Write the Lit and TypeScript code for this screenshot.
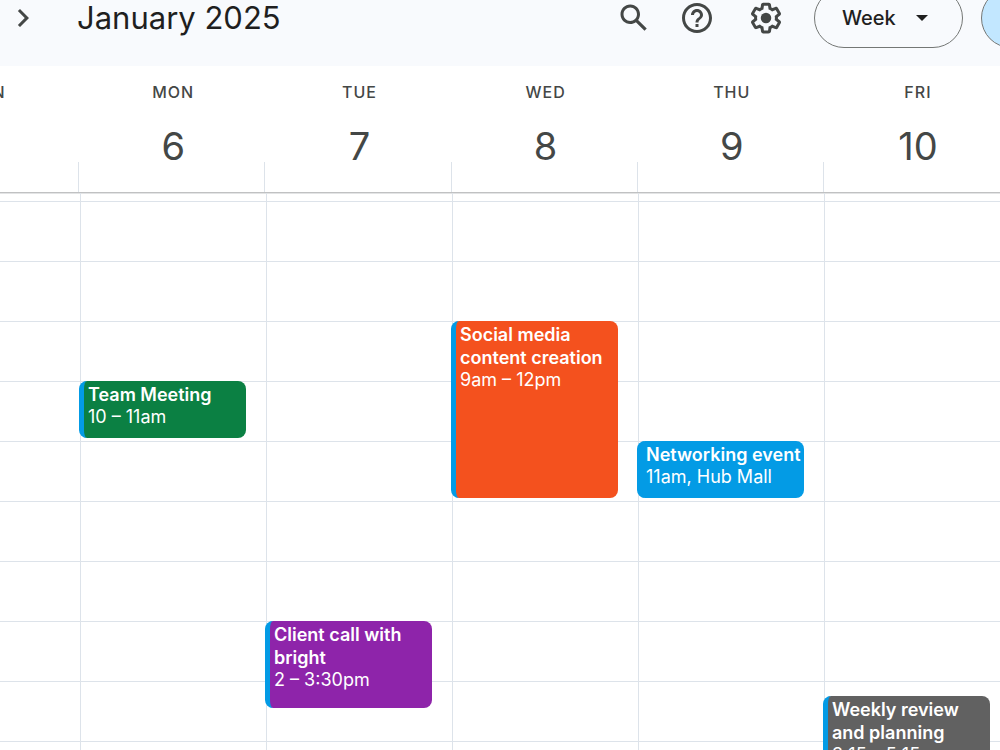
import { LitElement, html, css, svg } from "lit";
import { customElement, property } from "lit/decorators.js";
import { styleMap } from "lit/directives/style-map.js";

interface CalendarEvent {
  title: string;
  time: string;
  /** Quarter-hour grid lines, line 1 being 7am. */
  start: number;
  end: number;
  color: string;
}

interface Day {
  name: string;
  date: string;
  events: CalendarEvent[];
}

const week: Day[] = [
  { name: "SUN", date: "5", events: [] },
  {
    name: "MON",
    date: "6",
    events: [{ title: "Team Meeting", time: "10 – 11am", start: 13, end: 17, color: "#0b8043" }],
  },
  {
    name: "TUE",
    date: "7",
    events: [{ title: "Client call with bright", time: "2 – 3:30pm", start: 29, end: 35, color: "#8e24aa" }],
  },
  {
    name: "WED",
    date: "8",
    events: [{ title: "Social media content creation", time: "9am – 12pm", start: 9, end: 21, color: "#f4511e" }],
  },
  {
    name: "THU",
    date: "9",
    events: [{ title: "Networking event", time: "11am, Hub Mall", start: 17, end: 21, color: "#039be5" }],
  },
  {
    name: "FRI",
    date: "10",
    events: [{ title: "Weekly review and planning", time: "3:15 – 5:15pm", start: 34, end: 42, color: "#616161" }],
  },
];

const icons = {
  next: svg`<path d="M10 6 8.59 7.41 13.17 12l-4.58 4.59L10 18l6-6z"/>`,
  search: svg`<path d="M20.49 19l-5.73-5.73C15.53 12.2 16 10.91 16 9.5 16 5.91 13.09 3 9.5 3S3 5.91 3 9.5 5.91 16 9.5 16c1.41 0 2.7-.47 3.77-1.24L19 20.49 20.49 19zM5 9.5C5 7.01 7.01 5 9.5 5S14 7.01 14 9.5 11.99 14 9.5 14 5 11.99 5 9.5z"/>`,
  help: svg`<path d="M11 18h2v-2h-2v2zm1-16C6.48 2 2 6.48 2 12s4.48 10 10 10 10-4.48 10-10S17.52 2 12 2zm0 18c-4.41 0-8-3.59-8-8s3.59-8 8-8 8 3.59 8 8-3.59 8-8 8zm0-14c-2.21 0-4 1.79-4 4h2c0-1.1.9-2 2-2s2 .9 2 2c0 2-3 1.75-3 5h2c0-2.25 3-2.5 3-5 0-2.21-1.79-4-4-4z"/>`,
  settings: svg`<path d="M13.85 22.25h-3.7c-.74 0-1.36-.54-1.45-1.27l-.27-1.89c-.27-.14-.53-.29-.79-.46l-1.8.72c-.7.26-1.47-.03-1.81-.65L2.2 15.53c-.35-.66-.2-1.44.36-1.88l1.53-1.19c-.01-.15-.02-.3-.02-.46 0-.15.01-.31.02-.46l-1.52-1.19c-.59-.45-.74-1.26-.37-1.88l1.85-3.19c.34-.62 1.11-.9 1.79-.63l1.81.73c.26-.17.52-.32.78-.46l.27-1.91c.09-.7.71-1.25 1.44-1.25h3.7c.74 0 1.36.54 1.45 1.27l.27 1.89c.27.14.53.29.79.46l1.8-.72c.71-.26 1.48.03 1.82.65l1.84 3.18c.36.66.2 1.44-.36 1.88l-1.52 1.19c.01.15.02.3.02.46s-.01.31-.02.46l1.52 1.19c.56.45.72 1.23.37 1.86l-1.86 3.22c-.34.62-1.11.9-1.8.63l-1.8-.72c-.26.17-.52.32-.78.46l-.27 1.91c-.1.68-.72 1.22-1.46 1.22zm-3.23-2h2.76l.37-2.55.53-.22c.44-.18.88-.44 1.34-.78l.45-.34 2.38.96 1.38-2.4-2.03-1.58.07-.56c.03-.26.06-.51.06-.78s-.03-.53-.06-.78l-.07-.56 2.03-1.58-1.39-2.4-2.39.96-.45-.35c-.42-.32-.87-.58-1.33-.77l-.52-.22-.37-2.55h-2.76l-.37 2.55-.53.21c-.44.19-.88.44-1.34.79l-.45.33-2.38-.95-1.39 2.39 2.03 1.58-.07.56a7 7 0 0 0-.06.79c0 .26.02.53.06.78l.07.56-2.03 1.58 1.38 2.4 2.39-.96.45.35c.43.33.86.58 1.33.77l.53.22.38 2.55z"/><circle cx="12" cy="12" r="3.5"/>`,
};

const icon = (shape: unknown) =>
  html`<svg class="icon" viewBox="0 0 24 24" aria-hidden="true">${shape}</svg>`;

@customElement("calendar-event")
class CalendarEventBlock extends LitElement {
  @property({ attribute: false }) event!: CalendarEvent;

  static styles = css`
    :host {
      display: block;
    }
    .event {
      display: block;
      box-sizing: border-box;
      width: 100%;
      height: 100%;
      padding: 2px 0 0 4px;
      border: 0;
      border-left: 5px solid #039be5;
      border-radius: 8px;
      overflow: hidden;
      color: #fff;
      font: inherit;
      text-align: left;
    }
    .content {
      display: flex;
      flex-direction: column;
      height: 100%;
    }
    .title {
      font-weight: 600;
      line-height: 23px;
    }
    .time {
      line-height: 22px;
    }
  `;

  render() {
    const { title, time, color } = this.event;
    return html`<button class="event" style=${styleMap({ backgroundColor: color })}>
      <span class="content"><span class="title">${title}</span><span class="time">${time}</span></span>
    </button>`;
  }
}

@customElement("app-root")
class AppRoot extends LitElement {
  static styles = css`
    :host {
      display: flex;
      flex-direction: column;
      height: 100vh;
      overflow: hidden;
      background: #fff;
      color: #444746;
      font-family: "Google Sans", Inter, "Liberation Sans", sans-serif;
    }
    .toolbar {
      display: flex;
      flex: none;
      align-items: center;
      justify-content: space-between;
      box-sizing: border-box;
      height: 96px;
      margin: -30px -81px 0 0;
      padding: 0 0 0 5px;
      background: #f8fafd;
    }
    .period,
    .actions,
    .tools,
    .lookup {
      display: flex;
      align-items: center;
    }
    .period {
      gap: 36px;
    }
    .tools {
      gap: 33px;
      margin-right: 30px;
    }
    .lookup {
      gap: 27px;
    }
    .month {
      margin: 0;
      color: #1f1f1f;
      font-size: 31px;
      font-weight: 400;
      line-height: 36px;
      white-space: nowrap;
    }
    .icon-button {
      display: flex;
      padding: 0;
      border: 0;
      background: none;
      color: inherit;
    }
    .icon {
      width: 36px;
      height: 36px;
      fill: currentColor;
    }
    .pill {
      box-sizing: border-box;
      height: 60px;
      border: 1px solid #747775;
      border-radius: 30px;
    }
    .view {
      display: flex;
      align-items: center;
      width: 149px;
      margin-right: 18px;
    }
    .view-select {
      width: 100%;
      height: 100%;
      padding: 0 27px;
      border: 0;
      appearance: none;
      background: none;
      color: #1f1f1f;
      font: inherit;
      font-size: 20px;
      font-weight: 500;
    }
    .caret {
      flex: none;
      width: 12px;
      height: 6px;
      margin: 0 34px 0 -46px;
      fill: #1f1f1f;
      pointer-events: none;
    }
    .mode {
      width: 100px;
      padding: 0;
      background: #c2e7ff;
    }
    .days,
    .hours {
      display: grid;
      grid-template-columns: repeat(6, minmax(0, 1fr));
    }
    .days {
      flex: none;
      height: 126px;
      margin: 0 -9px 0 -108px;
      border-bottom: 1px solid #c0c1c2;
      box-shadow: 0 1px 0 #e3e4e5;
    }
    .day {
      display: flex;
      flex-direction: column;
      align-items: center;
      gap: 24px;
      margin: 0;
      padding: 15px 0 0 4px;
      background: linear-gradient(#dde3ea, #dde3ea) left bottom / 1px 30px no-repeat;
      font-weight: 400;
    }
    .name {
      font-size: 16px;
      font-weight: 500;
      line-height: 22px;
      letter-spacing: 1px;
    }
    .date {
      font-size: 38px;
      line-height: 38px;
    }
    .hours {
      flex: 1;
      min-height: 0;
      margin: 0 -10px 0 -106px;
      background: linear-gradient(#dde3ea 1px, transparent 1px) 0 8px / 100% 60px;
    }
    .column {
      display: grid;
      grid-template-rows: repeat(44, 15px);
      padding: 8px 20px 0 0;
      border-left: 1px solid #dde3ea;
      font-size: 18px;
    }
    .slot {
      margin: 0 0 3px -2px;
    }
  `;

  render() {
    return html`
      <header class="toolbar">
        <div class="period">
          <button class="icon-button" aria-label="Next week">${icon(icons.next)}</button>
          <h1 class="month">January 2025</h1>
        </div>
        <div class="actions">
          <div class="tools">
            <div class="lookup">
              <button class="icon-button" aria-label="Search">${icon(icons.search)}</button>
              <button class="icon-button" aria-label="Support">${icon(icons.help)}</button>
            </div>
            <button class="icon-button" aria-label="Settings">${icon(icons.settings)}</button>
          </div>
          <div class="view pill">
            <select class="view-select" aria-label="View">
              <option>Week</option>
            </select>
            <svg class="caret" viewBox="0 0 12 6" aria-hidden="true"><path d="M0 0h12L6 6z" /></svg>
          </div>
          <button class="mode pill" aria-label="Calendar mode"></button>
        </div>
      </header>
      <div class="days">
        ${week.map(
          (day) => html`<h2 class="day">
            <span class="name">${day.name}</span>
            <span class="date">${day.date}</span>
          </h2>`
        )}
      </div>
      <main class="hours">
        ${week.map(
          (day) => html`<div class="column">
            ${day.events.map(
              (event) => html`<calendar-event
                class="slot"
                style=${styleMap({ gridRow: `${event.start} / ${event.end}` })}
                .event=${event}
              ></calendar-event>`
            )}
          </div>`
        )}
      </main>
    `;
  }
}
